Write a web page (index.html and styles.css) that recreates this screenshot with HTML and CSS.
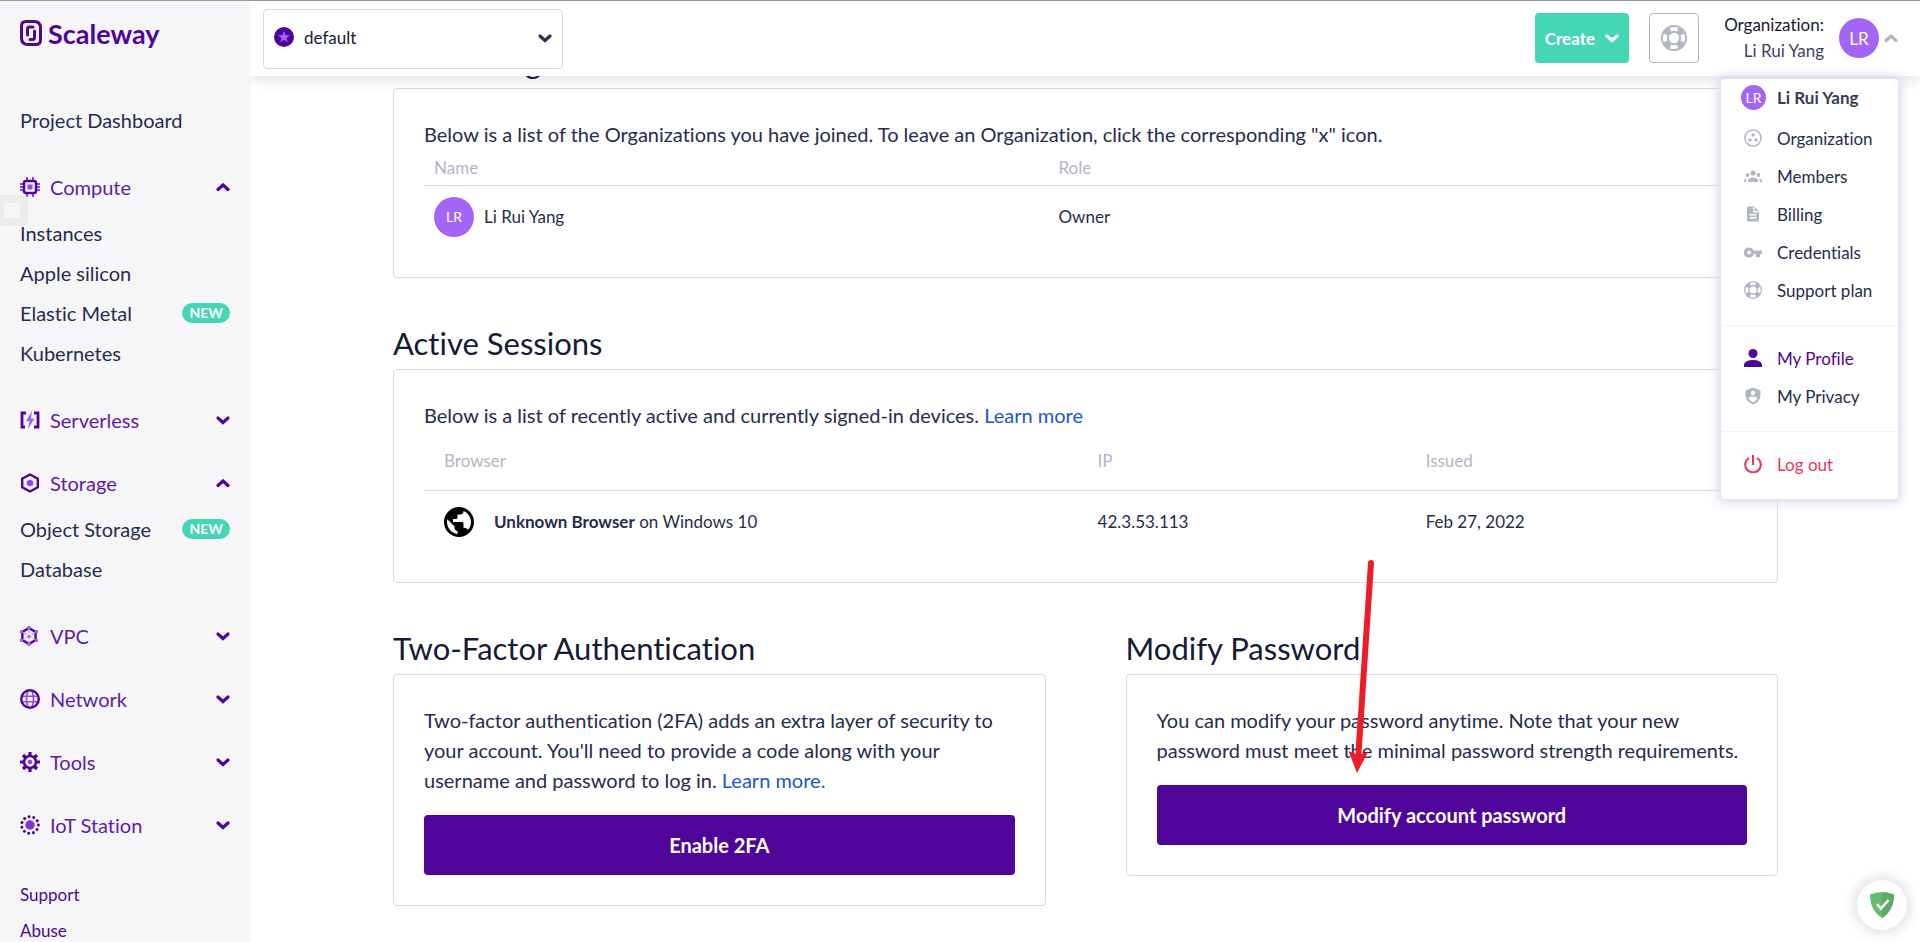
FILE: index.html
```html
<!DOCTYPE html>
<html lang="en">
<head>
<meta charset="utf-8">
<title>Scaleway Console - My Profile</title>
<link rel="stylesheet" href="styles.css">
</head>
<body>
<svg class="defs" aria-hidden="true">
  <symbol id="down" viewBox="0 0 14 9"><path d="M2 2l5 4.500 5-4.500" fill="none" stroke="currentColor" stroke-width="3.200" stroke-linecap="round"/></symbol>
  <symbol id="up" viewBox="0 0 14 9"><path d="M2 6.500l5-4.500 5 4.500" fill="none" stroke="currentColor" stroke-width="3.200" stroke-linecap="round"/></symbol>
  <symbol id="buoy" viewBox="2 2 20 20"><path fill="currentColor" fill-rule="evenodd" d="M19.790 15.410C20.740 13.240 20.740 10.750 19.790 8.590L17.050 9.830C17.650 11.210 17.650 12.780 17.060 14.170L19.790 15.410M15.420 4.210C13.250 3.260 10.760 3.260 8.590 4.210L9.830 6.940C11.220 6.350 12.790 6.350 14.180 6.950L15.420 4.210M4.210 8.580C3.260 10.760 3.260 13.240 4.210 15.420L6.950 14.170C6.350 12.790 6.350 11.210 6.950 9.820L4.210 8.580M8.590 19.790C10.760 20.740 13.250 20.740 15.420 19.780L14.180 17.050C12.800 17.650 11.220 17.650 9.840 17.060L8.590 19.790M12 2A10 10 0 0 1 22 12A10 10 0 0 1 12 22A10 10 0 0 1 2 12A10 10 0 0 1 12 2M12 8A4 4 0 0 0 8 12A4 4 0 0 0 12 16A4 4 0 0 0 16 12A4 4 0 0 0 12 8Z"/></symbol>
</svg>

<div class="app">
  <aside class="sidebar">
    <a class="logo" href="#">
      <svg width="22" height="26" viewBox="0 0 22 26" fill="none" stroke="#4f0599" stroke-width="3" stroke-linecap="round" stroke-linejoin="round"><path d="M6 1.500h8q6.500 0 6.500 6.500v12q0 4.500-4.500 4.500H8q-6.500 0-6.500-6.500V6q0-4.500 4.500-4.500z"/><path d="M13 7H9.500Q7.500 7 7.500 9v6M10 19.500h2.500q2 0 2-2V11"/></svg>
      <span>Scaleway</span>
    </a>
    <nav class="nav">
      <a class="item" href="#">Project Dashboard</a>
      <section class="group">
        <button class="group-head" type="button"><svg width="20" height="20" viewBox="0 0 20 20"><path d="M7 0v4M13 0v4M7 16v4M13 16v4M0 7h4M0 13h4M16 7h4M16 13h4M0 10h4M16 10h4" stroke="#8c40e0" stroke-width="2"/><rect x="4" y="4" width="12" height="12" rx="2" fill="none" stroke="#4f0599" stroke-width="2.500"/><rect x="7.500" y="7.500" width="5" height="5" fill="#9148e8"/></svg><span>Compute</span><svg class="chev" width="14" height="9"><use href="#up"/></svg></button>
        <a class="item" href="#">Instances</a>
        <a class="item" href="#">Apple silicon</a>
        <a class="item" href="#">Elastic Metal<span class="badge">NEW</span></a>
        <a class="item" href="#">Kubernetes</a>
      </section>
      <section class="group closed">
        <button class="group-head" type="button"><svg width="20" height="20" viewBox="0 0 20 20"><path d="M6 3H2v14h3M14 3h4v14h-4" fill="none" stroke="#4f0599" stroke-width="2.800"/><path d="M12 1L6 11h3.500L8 19l6.500-10.500H11z" fill="#a365f6"/></svg><span>Serverless</span><svg class="chev" width="14" height="9"><use href="#down"/></svg></button>
      </section>
      <section class="group">
        <button class="group-head" type="button"><svg width="20" height="20" viewBox="0 0 20 20"><path d="M10 1.500l7.800 4.250v8.500L10 18.500l-7.800-4.250v-8.500z" fill="none" stroke="#4f0599" stroke-width="2.400"/><path d="M10 6.400l3.200 1.800v3.600L10 13.600l-3.200-1.800V8.200z" fill="#9148e8"/></svg><span>Storage</span><svg class="chev" width="14" height="9"><use href="#up"/></svg></button>
        <a class="item" href="#">Object Storage<span class="badge">NEW</span></a>
        <a class="item" href="#">Database</a>
      </section>
      <section class="group closed">
        <button class="group-head" type="button"><svg width="20" height="20" viewBox="0 0 20 20"><path d="M9 2l6.600 4v8L9 18l-6.600-4V6z" fill="none" stroke="#4f0599" stroke-width="2.400"/><path d="M9 3v14M3 6.500l12 7M15 6.500l-12 7" stroke="#b98af5" stroke-width="1.200" stroke-dasharray="4 2"/><g fill="#a365f6"><rect x="7.500" y="0" width="3" height="3"/><rect x="7.500" y="17" width="3" height="3"/><rect x="0" y="4" width="3" height="3"/><rect x="15" y="4" width="3" height="3"/><rect x="0" y="13" width="3" height="3"/><rect x="15" y="13" width="3" height="3"/><circle cx="9" cy="10" r="1.500"/></g></svg><span>VPC</span><svg class="chev" width="14" height="9"><use href="#down"/></svg></button>
      </section>
      <section class="group closed">
        <button class="group-head" type="button"><svg width="20" height="20" viewBox="0 0 20 20" fill="none"><path d="M2 7.300h16M2 12.700h16M8 2q-3 8 0 16M12 2q3 8 0 16" stroke="#9148e8" stroke-width="1.600"/><circle cx="10" cy="10" r="8.800" stroke="#4f0599" stroke-width="2.400"/></svg><span>Network</span><svg class="chev" width="14" height="9"><use href="#down"/></svg></button>
      </section>
      <section class="group closed">
        <button class="group-head" type="button"><svg width="20" height="20" viewBox="0 0 20 20"><path d="M10 0v5M10 15v5M0 10h5M15 10h5M3 3l3.500 3.500M13.500 13.500L17 17M17 3l-3.500 3.500M6.500 13.500L3 17" stroke="#4f0599" stroke-width="3.200"/><circle cx="10" cy="10" r="6" fill="#f6f6f9" stroke="#4f0599" stroke-width="2.600"/><circle cx="10" cy="10" r="2.300" fill="#9148e8"/></svg><span>Tools</span><svg class="chev" width="14" height="9"><use href="#down"/></svg></button>
      </section>
      <section class="group closed">
        <button class="group-head" type="button"><svg width="20" height="20" viewBox="0 0 20 20"><circle cx="10" cy="10" r="4.700" fill="#8433d6"/><circle cx="10" cy="10" r="8.400" fill="none" stroke="#4f0599" stroke-width="3" stroke-linecap="round" stroke-dasharray="0.010 4.788"/></svg><span>IoT Station</span><svg class="chev" width="14" height="9"><use href="#down"/></svg></button>
      </section>
      <div class="links"><a href="#">Support</a><a href="#">Abuse</a></div>
    </nav>
    <div class="side-tab"></div>
  </aside>

  <div class="page">
    <header class="topbar">
      <div class="project">
        <svg class="star" width="20" height="20" viewBox="0 0 20 20"><circle cx="10" cy="10" r="10" fill="#4f0599"/><path d="M10 4l1.500 4.200 4.500.1-3.600 2.700 1.300 4.300L10 12.800l-3.700 2.500 1.300-4.300L4 8.300l4.500-.1z" fill="#a365f6"/></svg>
        <select aria-label="Project"><option>default</option></select>
        <svg class="caret" width="14" height="9"><use href="#down"/></svg>
      </div>
      <div class="actions">
        <button class="create" type="button">Create<svg width="14" height="9"><use href="#down"/></svg></button>
        <button class="help" type="button" aria-label="Help"><svg width="26" height="26"><use href="#buoy"/></svg></button>
        <button class="account" type="button">
          <span class="org"><span>Organization:</span><span class="who">Li Rui Yang</span></span>
          <span class="avatar">LR</span>
          <svg width="14" height="9"><use href="#up"/></svg>
        </button>
      </div>
      <nav class="menu" aria-label="Account">
        <div class="menu-name"><span class="avatar small">LR</span>Li Rui Yang</div>
        <div class="menu-part first">
          <a href="#"><svg width="18" height="18" viewBox="0 0 18 18"><circle cx="9" cy="9" r="8" fill="none" stroke="currentColor" stroke-width="1.500"/><g fill="currentColor"><circle cx="9" cy="6" r="1.700"/><circle cx="6" cy="11" r="1.700"/><circle cx="12" cy="11" r="1.700"/></g></svg>Organization</a>
          <a href="#"><svg width="18" height="18" viewBox="0 0 18 18" fill="currentColor"><circle cx="9" cy="6" r="2.600"/><ellipse cx="3.600" cy="8" rx="1.700" ry="2"/><ellipse cx="14.400" cy="8" rx="1.700" ry="2"/><path d="M4 15v-2q1-2.500 5-2.500t5 2.500v2zM0 15v-1.500Q.5 12 2.800 11.500Q2 13 2 15zM18 15v-1.500q-.5-1.500-2.800-2Q16 13 16 15z"/></svg>Members</a>
          <a href="#"><svg width="18" height="18" viewBox="0 0 18 18"><path d="M3 3q0-1.500 1.500-1.500H10L15 6.500V15q0 1.500-1.500 1.500h-9Q3 16.500 3 15z" fill="currentColor"/><path d="M10 2.500v4.200h4M5.500 9.700h7M5.500 12.700h7" fill="none" stroke="#fff" stroke-width="1.400"/></svg>Billing</a>
          <a href="#"><svg width="18" height="18" viewBox="0 0 18 18"><path d="M5 4.500a5 5 0 1 0 4.700 6.500H12v3.300h4V11h2V7.500H9.700A5 5 0 0 0 5 4.500zM5 7.500a2 2 0 1 1 0 4 2 2 0 0 1 0-4z" fill="currentColor" fill-rule="evenodd"/></svg>Credentials</a>
          <a href="#"><svg width="18" height="18"><use href="#buoy"/></svg>Support plan</a>
        </div>
        <div class="menu-part">
          <a class="current" href="#"><svg width="18" height="18" viewBox="0 0 18 18" fill="currentColor"><circle cx="9" cy="4.500" r="4.500"/><path d="M0 18v-2.500Q1 11 9 11t9 4.500V18z"/></svg>My Profile</a>
          <a href="#"><svg width="18" height="18" viewBox="0 0 18 18"><path d="M9 .5l7.500 3V8q0 6.500-7.500 9.500Q1.500 14.500 1.500 8V3.500z" fill="currentColor"/><circle cx="9" cy="6" r="2.200" fill="#fff"/><path d="M4.500 11.500q.8-2 4.500-2t4.500 2Q12 14 9 15.200Q6 14 4.500 11.500z" fill="#fff"/></svg>My Privacy</a>
        </div>
        <div class="menu-part">
          <a class="danger" href="#"><svg width="18" height="18" viewBox="0 0 18 18" fill="none" stroke="currentColor" stroke-width="2"><path d="M9 0v10M5 3a7.800 7.800 0 1 0 8 0"/></svg>Log out</a>
        </div>
      </nav>
    </header>

    <main class="content">
      <h2>Joined Organizations</h2>
      <div class="card">
        <p>Below is a list of the Organizations you have joined. To leave an Organization, click the corresponding "x" icon.</p>
        <table class="orgs">
          <thead><tr><th class="org-name">Name</th><th>Role</th></tr></thead>
          <tbody><tr><td><div class="cell"><span class="avatar flat">LR</span>Li Rui Yang</div></td><td>Owner</td></tr></tbody>
        </table>
      </div>
      <h2>Active Sessions</h2>
      <div class="card">
        <p>Below is a list of recently active and currently signed-in devices. <a href="#">Learn more</a></p>
        <table class="sessions">
          <thead><tr><th class="browser">Browser</th><th class="ip">IP</th><th>Issued</th></tr></thead>
          <tbody><tr><td><div class="cell wide"><svg width="30" height="30" viewBox="2 2 20 20"><path d="M12 2C6.480 2 2 6.480 2 12s4.480 10 10 10 10-4.480 10-10S17.520 2 12 2zm-1 17.930c-3.950-.49-7-3.850-7-7.930 0-.62.080-1.210.21-1.790L9 15v1c0 1.100.9 2 2 2v1.930zm6.900-2.540c-.26-.81-1-1.390-1.900-1.390h-1v-3c0-.55-.45-1-1-1H8v-2h2c.55 0 1-.45 1-1V7h2c1.100 0 2-.9 2-2v-.41c2.930 1.190 5 4.060 5 7.410 0 2.080-.8 3.970-2.100 5.390z"/></svg><span><b>Unknown Browser</b> on Windows 10</span></div></td><td>42.3.53.113</td><td>Feb 27, 2022</td></tr></tbody>
        </table>
      </div>
      <div class="columns">
        <section>
          <h2>Two-Factor Authentication</h2>
          <div class="card">
            <p>Two-factor authentication (2FA) adds an extra layer of security to your account. You'll need to provide a code along with your username and password to log in. <a href="#">Learn more.</a></p>
            <button class="primary" type="button">Enable 2FA</button>
          </div>
        </section>
        <section class="password">
          <h2>Modify Password</h2>
          <div class="card">
            <p>You can modify your password anytime. Note that your new password must meet the minimal password strength requirements.</p>
            <button class="primary" type="button">Modify account password</button>
          </div>
          <svg class="arrow" width="30" height="216" viewBox="0 0 30 216"><path d="M25 4L12.500 194" stroke="#ee1c25" stroke-width="6" stroke-linecap="round"/><path d="M11 214L2.500 192l9.500 4 10-3z" fill="#ee1c25"/></svg>
        </section>
      </div>
    </main>
  </div>
</div>
<button class="shield" type="button" aria-label="Protection"><svg width="26" height="28" viewBox="0 0 26 28"><path d="M13 1q5.500 0 12 2.500 0 16-12 23.500Q1 19.500 1 3.500 7.500 1 13 1z" fill="#68bc71"/><path d="M13 1q5.500 0 12 2.500 0 16-12 23.500z" fill="#5cab68"/><path d="M8 13l4 4.500L19.500 9" fill="none" stroke="#fff" stroke-width="2.600"/></svg></button>
</body>
</html>
```

FILE: styles.css
```css
* { box-sizing: border-box; }
body { margin: 0; font-family: Lato, "Liberation Sans", sans-serif; font-size: 20px; font-variant-ligatures: none; color: #262c4e; background: #fff; overflow: hidden; }
a { color: inherit; text-decoration: none; }
button { font: inherit; font-variant-ligatures: none; color: inherit; border: 0; background: none; padding: 0; cursor: pointer; }
svg { display: block; flex: none; }
.defs { position: absolute; width: 0; height: 0; }

.app { display: flex; height: 100vh; border-top: 1px solid #8fa3ab; }
.sidebar { position: relative; z-index: 3; flex: none; width: 250px; padding: 18px 20px 0; background: #f6f6f9; overflow: hidden; }
.logo { display: flex; align-items: center; gap: 6px; height: 28px; margin-bottom: 53px; color: #4f0599; font-size: 27px; font-weight: 700; }
.nav { display: flex; flex-direction: column; }
.item { display: flex; align-items: center; justify-content: space-between; height: 40px; }
.group { margin-top: 11px; padding-bottom: 10px; }
.item + .group { margin-top: 21px; }
.closed { padding-bottom: 0; }
.group-head { display: flex; align-items: center; gap: 10px; width: 100%; height: 52px; color: #5f1bab; }
.chev { margin-left: auto; color: #4f0599; }
.badge { padding: 0 7px; border-radius: 10px; background: #45d6b5; color: #fff; font-size: 14px; font-weight: 700; line-height: 20px; }
.links { display: flex; flex-direction: column; margin-top: 26px; color: #4f0599; font-size: 17px; line-height: 36px; }
.side-tab { position: absolute; left: 0; top: 194px; width: 28px; height: 31px; border: 8px solid #ebebec; border-left-width: 4px; border-radius: 0 5px 5px 0; background: #f6f6f6; }

.page { flex: 1; min-width: 0; }
.topbar { position: relative; z-index: 2; display: flex; justify-content: space-between; align-items: center; height: 75px; padding: 0 22px 1px 13px; background: #fff; box-shadow: 0 2px 14px rgba(40, 40, 70, .16); }
.project { position: relative; display: flex; align-items: center; width: 300px; height: 60px; margin-top: 2px; }
.project select { width: 100%; height: 100%; padding: 0 40px 4px 40px; border: 1px solid #d4dae7; border-radius: 4px; background: #fff; color: #151a35; font: inherit; font-size: 17px; appearance: none; }
.star { position: absolute; left: 11px; top: 18px; }
.caret { position: absolute; right: 11px; top: 25px; color: #2a3050; }
.actions { display: flex; align-items: center; gap: 20px; }
.create { display: flex; align-items: center; gap: 10px; height: 50px; padding: 0 10px; border-radius: 4px; background: #45d6b5; color: #fff; font-size: 17px; font-weight: 700; }
.help { display: grid; place-items: center; width: 50px; height: 50px; border: 1px solid #b2b6c3; border-radius: 4px; color: #b2b6c3; }
.account { display: flex; align-items: center; color: #b2b6c3; }
.org { display: flex; flex-direction: column; min-width: 105px; margin-right: 15px; color: #151a35; font-size: 17px; line-height: 26px; text-align: right; }
.who { color: #3d4260; }
.account svg { margin-left: 5px; }
.avatar { display: grid; place-items: center; flex: none; width: 40px; height: 40px; border-radius: 50%; background: #a365f6; color: #fff; font-size: 17px; font-weight: 400; }
.small { width: 25px; height: 25px; font-size: 14px; }
.flat { font-size: 14px; }

.menu { position: absolute; right: 22px; top: 78px; width: 177px; border-radius: 4px; background: #fff; box-shadow: 0 0 10px 4px #dcdcee; font-size: 17px; }
.menu-name { display: flex; align-items: center; gap: 11px; height: 36px; padding-left: 20px; color: #363c58; font-weight: 700; }
.menu-part { padding: 13px 0 16px; border-top: 1px solid #f3f3f7; }
.first { padding-top: 4px; border-top: 0; }
.menu a { display: flex; align-items: center; gap: 15px; height: 38px; padding-left: 23px; }
.menu a svg { color: #b2b6c3; }
.menu .current, .menu .current svg { color: #4f0599; }
.menu .danger, .menu .danger svg { color: #f0325a; }

.content { margin-top: -39px; padding: 0 142px 0 143px; }
h2 { margin: 0 0 1px; color: #151a35; font-size: 31px; font-weight: 400; line-height: 50px; }
.card { margin-bottom: 40px; padding: 30px; border: 1px solid #d4dae7; border-radius: 4px; }
p { margin: 0; line-height: 30px; }
p a { color: #1b55d4; }
table { width: 100%; border-collapse: separate; border-spacing: 0; table-layout: fixed; font-size: 17px; }
th { height: 37px; padding: 0 10px; border-bottom: 1px solid #d4dae7; color: #b2b6c3; font-weight: 400; text-align: left; }
td { height: 61px; padding: 0 10px; }
.org-name { width: 47.2%; }
.sessions th { height: 61px; padding: 0 20px; }
.sessions td { padding: 0 20px; }
.browser { width: 49.4%; }
.ip { width: 24.8%; }
.cell { display: flex; align-items: center; gap: 10px; }
.wide { gap: 20px; }
.columns { display: grid; grid-template-columns: 1fr 1fr; gap: 80px; align-items: start; }
.password { position: relative; }
.arrow { position: absolute; left: 220px; top: -64px; }
.primary { display: block; width: 100%; height: 60px; margin-top: 20px; border-radius: 4px; background: #4f0599; color: #fff; font-weight: 700; }
.shield { position: fixed; right: 13px; bottom: 12px; display: grid; place-items: center; width: 50px; height: 50px; border-radius: 50%; background: #fff; box-shadow: 0 0 16px rgba(0, 0, 0, .2); }
```
